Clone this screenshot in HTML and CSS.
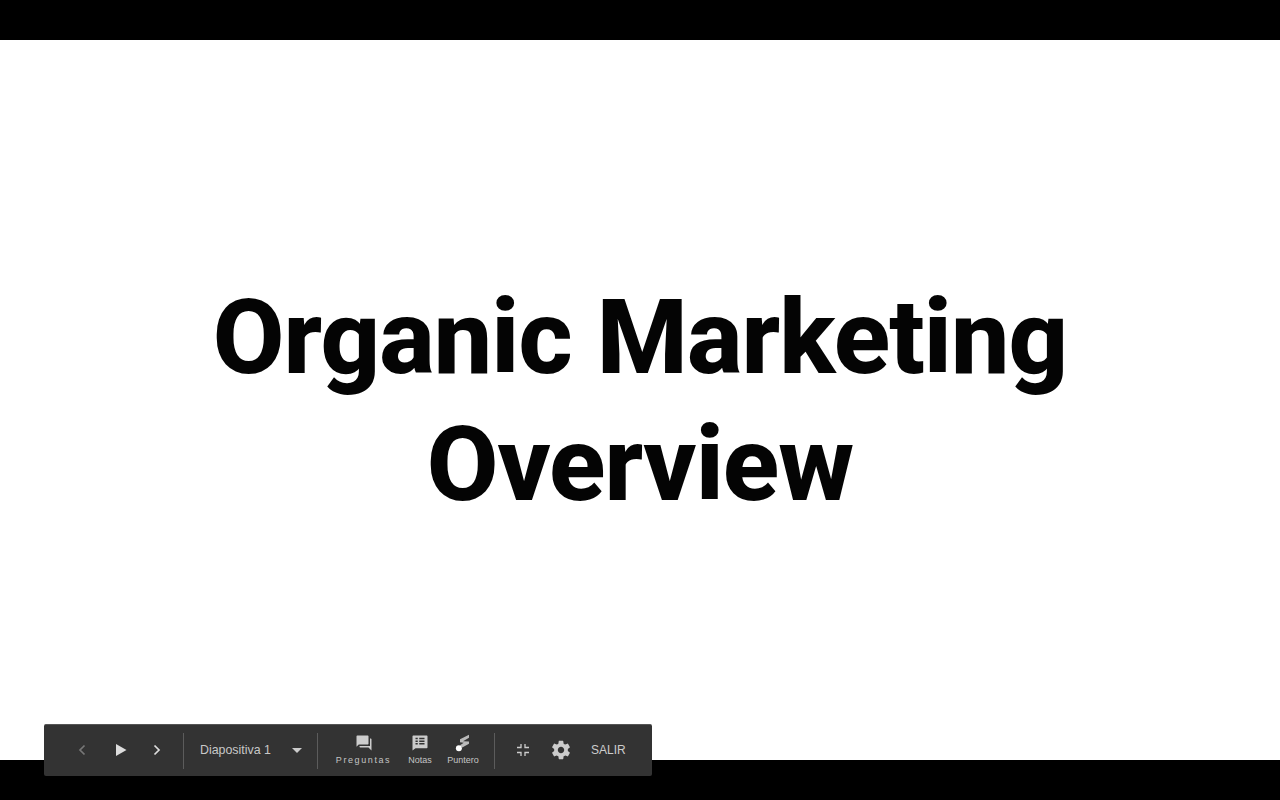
FILE: index.html
```html
<!DOCTYPE html>
<html lang="es">
<head>
<meta charset="utf-8">
<title>Organic Marketing Overview</title>
<link rel="stylesheet" href="styles.css">
</head>
<body>
<main class="stage">
  <section class="slide">
    <h1 class="title">Organic Marketing<br>Overview</h1>
  </section>
</main>
<nav class="toolbar">
  <div class="group nav-group">
    <svg class="ic-nav dim" viewBox="0 0 12 14"><path d="M8.500 2.500 4 7l4.500 4.500" fill="none" stroke="currentColor" stroke-width="1.700"/></svg>
    <svg class="ic-play" viewBox="0 0 12 14"><path d="M1 1v12l10.500-6z" fill="currentColor"/></svg>
    <svg class="ic-nav" viewBox="0 0 12 14"><path d="M3.500 2.500 8 7l-4.500 4.500" fill="none" stroke="currentColor" stroke-width="1.700"/></svg>
  </div>
  <div class="sep"></div>
  <div class="group slide-group">
    <span class="slide-label">Diapositiva 1</span>
    <svg class="ic-caret" viewBox="0 0 10 5"><path d="M0 0h10L5 5z" fill="currentColor"/></svg>
  </div>
  <div class="sep"></div>
  <div class="group tools-group">
    <div class="tool tool-q">
      <svg class="ic-tool" viewBox="0 0 24 24"><path d="M21 6h-1v10H6v1c0 .55.45 1 1 1h11l4 4V7c0-.55-.45-1-1-1zm-3 6V3c0-.55-.45-1-1-1H3c-.55 0-1 .45-1 1v14l0 0 3-3h12c.55 0 1-.45 1-1z" fill="currentColor"/></svg>
      <span class="tool-label spaced">Preguntas</span>
    </div>
    <div class="tool tool-n">
      <svg class="ic-tool" viewBox="0 0 24 24"><path d="M21 2H3c-.55 0-1 .45-1 1v19l4-3h15c.55 0 1-.45 1-1V3c0-.55-.45-1-1-1zM9 14H6v-2h3v2zm0-3.500H6v-2h3v2zM9 7H6V5h3v2zm9 7h-7v-2h7v2zm0-3.500h-7v-2h7v2zM18 7h-7V5h7v2z" fill="currentColor"/></svg>
      <span class="tool-label">Notas</span>
    </div>
    <div class="tool tool-p">
      <svg class="ic-tool" viewBox="0 0 24 24"><path d="M20 1v4l-8 4.500 8 .5v3l-9 5-3-3 5-3.500-5-.5V7z" fill="#b9b9b9"/><circle cx="6.500" cy="19" r="4" fill="#fff"/></svg>
      <span class="tool-label">Puntero</span>
    </div>
  </div>
  <div class="sep"></div>
  <div class="group end-group">
    <svg class="ic-exit" viewBox="0 0 14 14"><path d="M1 4.500h4V1M13 4.500H9V1M1 9.500h4V13M13 9.500H9V13" fill="none" stroke="currentColor" stroke-width="1.300"/></svg>
    <svg class="ic-gear" viewBox="0 0 24 24"><path d="M19.430 12.980c.04-.32.07-.64.07-.98s-.03-.66-.07-.98l2.110-1.650c.19-.15.24-.42.12-.64l-2-3.460c-.12-.22-.39-.3-.61-.22l-2.490 1c-.52-.4-1.080-.73-1.690-.98l-.38-2.650A.49.49 0 0 0 14 2h-4c-.25 0-.46.18-.49.42l-.38 2.650c-.61.25-1.170.59-1.690.98l-2.490-1c-.23-.09-.49 0-.61.22l-2 3.460c-.13.22-.07.49.12.64l2.110 1.650c-.04.32-.07.65-.07.98s.03.66.07.98l-2.110 1.650c-.19.15-.24.42-.12.64l2 3.460c.12.22.39.3.61.22l2.490-1c.52.4 1.080.73 1.690.98l.38 2.650c.03.24.24.42.49.42h4c.25 0 .46-.18.49-.42l.38-2.650c.61-.25 1.170-.59 1.690-.98l2.490 1c.23.09.49 0 .61-.22l2-3.460c.12-.22.07-.49-.12-.64l-2.110-1.650zM12 15.500c-1.930 0-3.500-1.570-3.500-3.500s1.570-3.500 3.500-3.500 3.500 1.570 3.500 3.500-1.570 3.500-3.500 3.500z" fill="currentColor"/></svg>
    <span class="exit-label">SALIR</span>
  </div>
</nav>
</body>
</html>
```
FILE: styles.css
```css
* { box-sizing: border-box; }
html, body { margin: 0; height: 100%; }
body { background: #000; overflow: hidden; font-family: "Liberation Sans", Arial, sans-serif; position: relative; }
.stage { height: 800px; padding: 40px 0; }
.slide { height: 720px; background: #fff; display: flex; align-items: center; justify-content: center; }
.title {
  margin: 2px 0 0;
  font-family: Roboto, sans-serif;
  font-weight: 800;
  font-size: 104px;
  line-height: 127px;
  text-align: center;
  color: #040404;
  letter-spacing: -0.900px;
}
.toolbar {
  position: absolute;
  left: 44px;
  top: 724px;
  width: 608px;
  height: 52px;
  background: #333;
  border-top: 1px solid #555;
  border-radius: 2px;
  display: flex;
  align-items: center;
  color: #ddd;
}
.group { display: flex; align-items: center; height: 100%; }
.sep { width: 1px; height: 36px; background: #5c5c5c; flex: none; }
.nav-group { width: 139px; padding-left: 32px; }
.ic-nav { width: 12px; height: 14px; margin-bottom: 1px; }
.ic-nav.dim { color: #777; }
.ic-play { width: 12px; height: 14px; margin: 0 24px 1px 27px; color: #ddd; }
.slide-group { width: 133px; padding-left: 16px; }
.slide-label { font-size: 12.400px; line-height: 14px; width: 92px; margin-bottom: 1px; color: #c8c8c8; }
.ic-caret { width: 10px; height: 5px; color: #ccc; }
.tools-group { width: 176px; padding-left: 17px; }
.tool { display: flex; flex-direction: column; align-items: center; gap: 3px; margin-bottom: 1px; }
.tool-q { width: 57px; }
.tool-n { width: 30px; margin-left: 13px; }
.tool-p { width: 32px; margin-left: 12px; }
.ic-tool { width: 18px; height: 18px; color: #ccc; }
.tool-label { font-size: 9px; line-height: 11px; color: #c4c4c4; white-space: nowrap; }
.tool-label.spaced { letter-spacing: 1.600px; }
.end-group { padding-left: 21px; }
.ic-exit { width: 14px; height: 14px; margin-bottom: 1px; color: #ccc; }
.ic-gear { width: 22px; height: 22px; margin: 0 0 1px 20px; color: #ccc; }
.exit-label { font-size: 12px; line-height: 14px; margin: 0 0 1px 19px; color: #ccc; }
```
